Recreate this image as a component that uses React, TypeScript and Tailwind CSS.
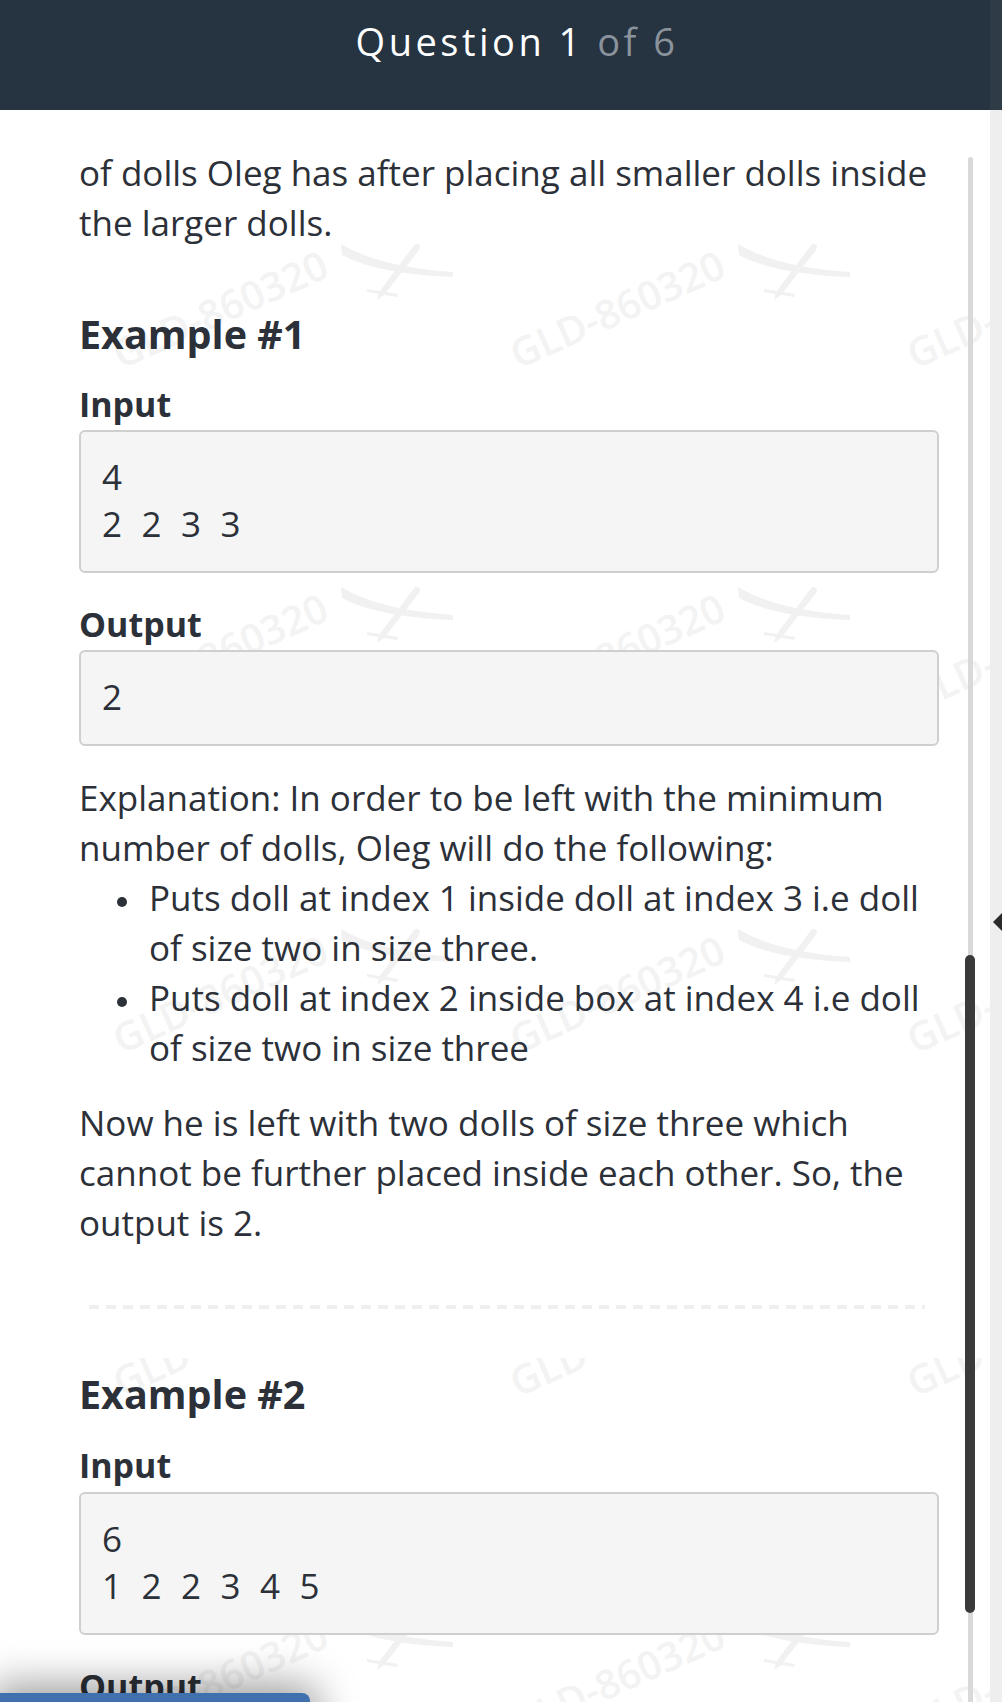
import React from 'react'

const ROWS = [0, 1, 2, 3, 4]
const COLS = [123, 520, 917]

function Plane() {
  return (
    <svg width="113" height="58" viewBox="0 0 113 58" className="absolute left-[218px] top-[-124px]">
      <path d="M0 1 Q38 24 112 29 L112 34 Q36 31 1 12 Z" fill="#f1f1f1" />
      <path d="M74 1 Q81 0 78 7 L43 52 L36 57 L38 49 Z" fill="#f1f1f1" />
      <path d="M26 46 L57 51 L56 54 L26 49 Z" fill="#f1f1f1" />
    </svg>
  )
}

function Watermarks() {
  return (
    <div className="pointer-events-none absolute inset-0">
      {ROWS.map((r) =>
        COLS.map((x) => (
          <div key={`${r}-${x}`} className="absolute" style={{ left: x, top: 257 + r * 342.5 }}>
            <span className="absolute bottom-[-7px] left-0 origin-bottom-left -rotate-[24deg] whitespace-nowrap text-[40px] font-semibold leading-none text-[#f3f3f3]">
              GLD-860320
            </span>
            <Plane />
          </div>
        ))
      )}
    </div>
  )
}

function SampleBox({ lines, tight }: { lines: string[]; tight?: boolean }) {
  return (
    <div
      className={`${tight ? 'mt-[6px]' : 'mt-[7px]'} rounded-[6px] border-2 border-[#cfcfcf] bg-[#f5f5f5] pb-[24px] pl-[21px] pt-[21px] text-[35px] leading-[47px] [word-spacing:10.4px]`}
    >
      {lines.map((l) => (
        <div key={l}>{l}</div>
      ))}
    </div>
  )
}

function Label({ children }: { children: React.ReactNode }) {
  return <h3 className="text-[34px] font-bold leading-[40px]">{children}</h3>
}

function Bullet({ children }: { children: React.ReactNode }) {
  return (
    <li className="flex">
      <span className="flex w-[70px] shrink-0 pl-[38px] pt-[24px]">
        <span className="h-[10px] w-[10px] rounded-full bg-[#2c3038]" />
      </span>
      <span>{children}</span>
    </li>
  )
}

export default function App() {
  return (
    <div className="relative h-[1702px] w-[1002px] overflow-hidden bg-white font-['Open_Sans',sans-serif] text-[#2c3038]">
      {/* TOP BAR */}
      <div className="flex h-[110px]">
        <div className="flex w-[990px] justify-center bg-[#263341] pl-[44px] pt-[15px]">
          <h1 className="text-[38px] leading-[52px] tracking-[3.5px] text-white">
            Question 1 <span className="text-[#8a929b]">of 6</span>
          </h1>
        </div>
        <div className="w-[12px] bg-[#303b48]" />
      </div>

      <div className="flex">
        <div className="relative h-[1592px] w-[990px] overflow-hidden">
          <Watermarks />

          <div className="relative w-[939px] pl-[79px] pt-[38px]">
            <p className="text-[35px] leading-[50px]">
              of dolls Oleg has after placing all smaller dolls inside the larger dolls.
            </p>

            {/* EXAMPLE 1 */}
            <h2 className="mt-[63px] text-[39.5px] font-bold leading-[46px]">Example #1</h2>
            <div className="mt-[27px]">
              <Label>Input</Label>
            </div>
            <SampleBox tight lines={['4', '2 2 3 3']} />
            <div className="mt-[31px]">
              <Label>Output</Label>
            </div>
            <SampleBox tight lines={['2']} />

            <div className="mt-[27px] text-[35px] leading-[50px]">
              <p>Explanation: In order to be left with the minimum number of dolls, Oleg will do the following:</p>
              <ul>
                <Bullet>Puts doll at index 1 inside doll at index 3 i.e doll of size two in size three.</Bullet>
                <Bullet>Puts doll at index 2 inside box at index 4 i.e doll of size two in size three</Bullet>
              </ul>
            </div>

            <p className="mt-[25px] text-[35px] leading-[50px]">
              Now he is left with two dolls of size three which cannot be further placed inside each other. So, the
              output is 2.
            </p>

            {/* SEPARATOR */}
            <div className="-ml-[79px] -mr-[51px] bg-white pb-[49px] pl-[89px] pr-[65px] pt-[57px]">
              <div className="h-[4px] bg-[repeating-linear-gradient(90deg,#efefef_0_10px,transparent_10px_17px)]" />
            </div>

            {/* EXAMPLE 2 */}
            <h2 className="mt-[13px] text-[39.5px] font-bold leading-[46px]">Example #2</h2>
            <div className="mt-[28px]">
              <Label>Input</Label>
            </div>
            <SampleBox lines={['6', '1 2 2 3 4 5']} />
            <div className="mt-[31px]">
              <Label>Output</Label>
            </div>
            <SampleBox lines={['2']} />
          </div>

          {/* inner scrollbar */}
          <div className="absolute left-[968px] top-[47px] h-[1560px] w-[5px] rounded-full bg-[#d9d9d9]" />
          <div className="absolute left-[965px] top-[845px] h-[658px] w-[10px] rounded-full bg-[#3a3a3a]" />
        </div>
        <div className="w-[12px] bg-[#eeeeee]" />
      </div>

      {/* collapse arrow */}
      <div className="absolute left-[993px] top-[912px] h-0 w-0 border-y-[10px] border-r-[10px] border-y-transparent border-r-[#2a2a2a]" />

      {/* bottom action bar */}
      <div className="absolute left-0 top-[1693px] h-[60px] w-[310px] rounded-tr-[8px] bg-[#4170af] shadow-[0_0_40px_8px_rgba(0,0,0,0.4)]" />
    </div>
  )
}
